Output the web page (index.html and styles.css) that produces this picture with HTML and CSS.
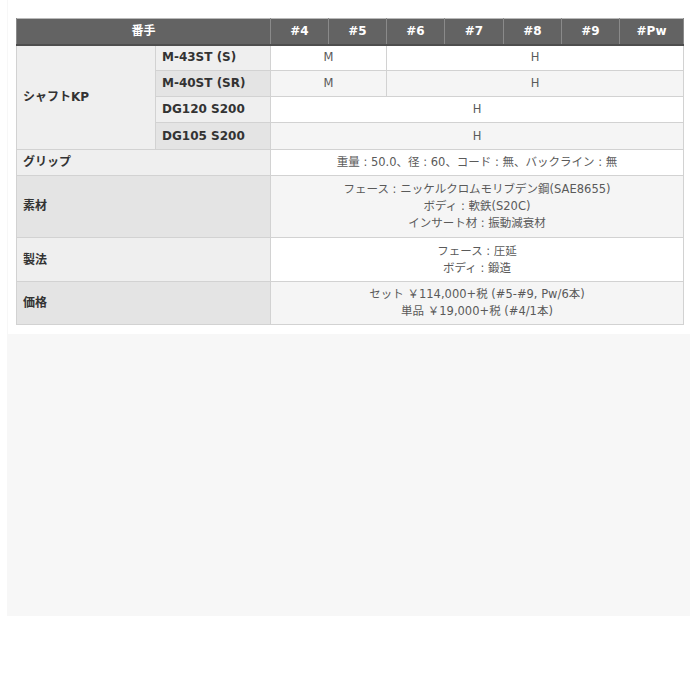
FILE: index.html
```html
<!DOCTYPE html>
<html lang="ja">
<head>
<meta charset="utf-8">
<link rel="stylesheet" href="styles.css">
</head>
<body>
<div class="panel">
  <div class="sheet">
    <table class="spec">
      <colgroup>
        <col class="c-label"><col class="c-sub">
        <col class="c-n"><col class="c-n"><col class="c-n"><col class="c-n7"><col class="c-n"><col class="c-n"><col class="c-pw">
      </colgroup>
      <thead>
        <tr>
          <th colspan="2">番手</th>
          <th>#4</th><th>#5</th><th>#6</th><th>#7</th><th>#8</th><th>#9</th><th>#Pw</th>
        </tr>
      </thead>
      <tbody>
        <tr class="odd first">
          <td class="lab lt" rowspan="4">シャフトKP</td>
          <td class="lab lt">M-43ST (S)</td>
          <td colspan="2">M</td>
          <td colspan="5">H</td>
        </tr>
        <tr class="even">
          <td class="lab dk">M-40ST (SR)</td>
          <td colspan="2">M</td>
          <td colspan="5">H</td>
        </tr>
        <tr class="odd">
          <td class="lab lt">DG120 S200</td>
          <td colspan="7">H</td>
        </tr>
        <tr class="even mid">
          <td class="lab dk">DG105 S200</td>
          <td colspan="7">H</td>
        </tr>
        <tr class="odd">
          <td class="lab lt" colspan="2">グリップ</td>
          <td colspan="7">重量 : 50.0、径 : 60、コード : 無、バックライン : 無</td>
        </tr>
        <tr class="even tall">
          <td class="lab dk" colspan="2">素材</td>
          <td colspan="7">フェース : ニッケルクロムモリブデン鋼(SAE8655)<br>ボディ : 軟鉄(S20C)<br>インサート材 : 振動減衰材</td>
        </tr>
        <tr class="odd mid">
          <td class="lab lt" colspan="2">製法</td>
          <td colspan="7">フェース : 圧延<br>ボディ : 鍛造</td>
        </tr>
        <tr class="even">
          <td class="lab dk" colspan="2">価格</td>
          <td colspan="7">セット ￥114,000+税 (#5-#9, Pw/6本)<br>単品 ￥19,000+税 (#4/1本)</td>
        </tr>
      </tbody>
    </table>
  </div>
</div>
</body>
</html>
```

FILE: styles.css
```css
html, body {
  margin: 0;
  padding: 0;
  background: #ffffff;
}

.panel {
  margin-left: 7px;
  width: 683px;
  height: 616px;
  background: #f7f7f7;
}

.sheet {
  background: #ffffff;
  padding: 18px 7px 9px 8px;
  margin-left: 1px;
  width: 668px;
}

.spec {
  width: 668px;
  border-collapse: collapse;
  table-layout: fixed;
  font-family: "DejaVu Sans", "Noto Sans CJK JP", sans-serif;
  font-size: 11.5px;
  line-height: 17px;
  color: #5a5a5a;
  border: 1px solid #b9b9b9;
}

.c-label { width: 139px; }
.c-sub { width: 115px; }
.c-n { width: 58px; }
.c-n7 { width: 59px; }
.c-pw { width: 64px; }

.spec th {
  background: #636363;
  color: #ffffff;
  font-size: 12px;
  font-weight: bold;
  height: 25px;
  padding: 0;
  text-align: center;
  border-left: 1px solid #8a8a8a;
  border-right: 1px solid #8a8a8a;
  border-bottom: 2px solid #4e4e4e;
}

.spec td {
  text-align: center;
  padding: 4px 6px;
  border: 1px solid #d2d2d2;
  height: 17px;
}

.spec tr.first td { padding: 3px 6px 4px; }
.spec tr.odd td { background: #ffffff; }
.spec tr.even td { background: #f5f5f5; }
.spec tr.tall td { padding: 5px 6px 5px; }
.spec tr.mid td { padding: 5px 6px 4px; }

.spec td.lab {
  text-align: left;
  font-size: 12px;
  font-weight: bold;
  color: #333333;
  padding-left: 6px;
}

.spec tr td.lab.lt { background: #efefef; }
.spec tr td.lab.dk { background: #e4e4e4; }
```
